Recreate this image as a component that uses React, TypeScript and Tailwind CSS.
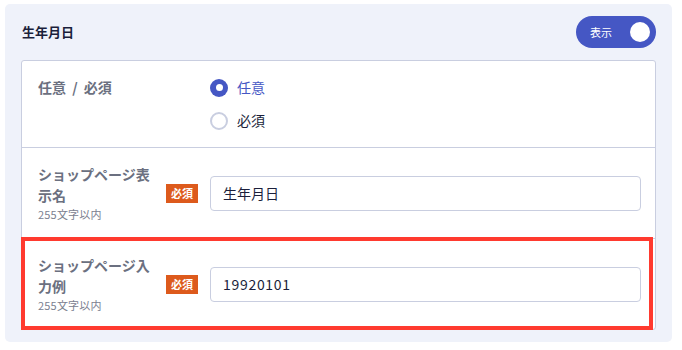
import React from "react";

const font = { fontFamily: '"Noto Sans CJK JP", "Noto Sans", sans-serif' };

function Badge() {
  return (
    <span className="flex h-[19px] w-[32px] shrink-0 items-center justify-center bg-[#dd5a1c] text-[11px] font-bold leading-none text-white">
      必須
    </span>
  );
}

function Label({ l1, l2 }: { l1: string; l2: string }) {
  return (
    <div className="w-[128px] shrink-0 pr-2">
      <div className="text-[14px] font-bold leading-[21px] text-[#6b7080]">
        {l1}
        <br />
        {l2}
      </div>
      <div className="text-[11px] leading-[16px] tracking-[0.2px] text-[#7b8090]">255文字以内</div>
    </div>
  );
}

export default function App() {
  return (
    <div className="min-h-[350px] bg-white pl-[5px] pt-[4px]" style={font}>
      <div className="w-[667px] rounded-[5px] bg-[#eff2fa] px-4 pb-3 pt-3">
        <div className="flex h-8 items-center justify-between">
          <div className="pl-[1px] text-[13px] font-bold text-[#1b1f3b]">生年月日</div>
          <div className="flex h-8 w-20 items-center justify-between rounded-full bg-[#4557c4] pl-[14px] pr-[6px]">
            <span className="text-[11px] leading-none text-white">表示</span>
            <span className="h-5 w-5 rounded-full bg-white" />
          </div>
        </div>
        <div className="mt-3 w-[635px] rounded-[3px] border border-[#c9cee0] bg-white">
          <div className="flex px-4 py-4">
            <div className="w-[172px] shrink-0 text-[14px] font-bold leading-[21px] text-[#6b7080] [word-spacing:3px]">
              任意 / 必須
            </div>
            <div className="flex flex-col gap-3">
              <div className="flex h-[21px] items-center gap-[9px]">
                <span className="flex h-[18px] w-[18px] items-center justify-center rounded-full bg-[#4557c4]">
                  <span className="h-[7px] w-[7px] rounded-full bg-white" />
                </span>
                <span className="text-[14px] leading-[21px] text-[#4557c4]">任意</span>
              </div>
              <div className="flex h-[21px] items-center gap-[9px]">
                <span className="h-[18px] w-[18px] rounded-full border-2 border-[#c9cee0] bg-white" />
                <span className="text-[14px] leading-[21px] text-[#1b1f3b]">必須</span>
              </div>
            </div>
          </div>
          <div className="flex items-center border-t border-[#c9cee0] py-4 pl-4 pr-[14px]">
            <Label l1="ショップページ表" l2="示名" />
            <Badge />
            <div className="ml-3 flex h-[35px] flex-1 items-center rounded-[4px] border border-[#c9cee0] bg-white px-3 text-[14px] text-[#1b1f3b]">
              生年月日
            </div>
          </div>
          <div className="relative flex items-center border-t border-[#c9cee0] py-4 pl-4 pr-[14px]">
            <Label l1="ショップページ入" l2="力例" />
            <Badge />
            <div className="ml-3 flex h-[35px] flex-1 items-center rounded-[4px] border border-[#c9cee0] bg-white px-3 text-[14px] tracking-[0.7px] text-[#1b1f3b]">
              19920101
            </div>
            <div className="pointer-events-none absolute bottom-[-1px] left-[-1px] right-[2px] top-[-2px] border-[4px] border-[#ff3a2f]" />
          </div>
        </div>
      </div>
    </div>
  );
}
